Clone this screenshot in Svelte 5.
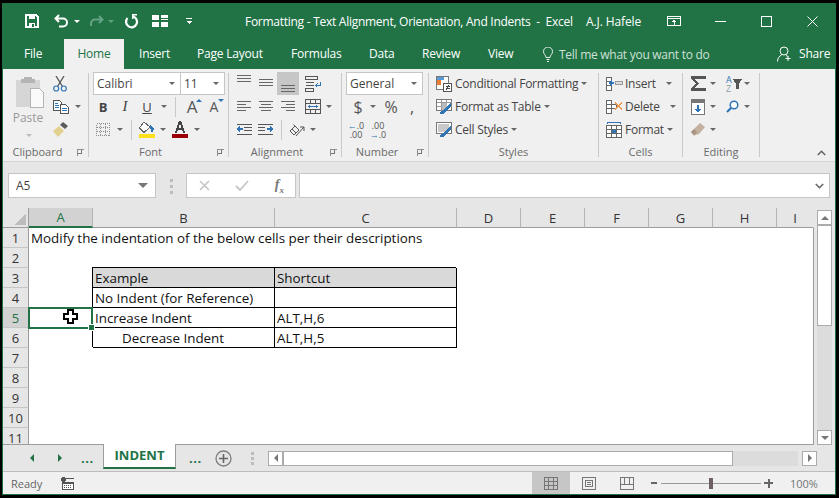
<script>
	const columns = [
		{ name: 'A', cls: 'cur' },
		{ name: 'B', cls: '' },
		{ name: 'C', cls: '' },
		{ name: 'D', cls: '' },
		{ name: 'E', cls: '' },
		{ name: 'F', cls: '' },
		{ name: 'G', cls: '' },
		{ name: 'H', cls: '' },
		{ name: 'I', cls: 'last' }
	];

	// only the cells that hold something, everything else is blank
	const cells = {
		'A1': { text: 'Modify the indentation of the below cells per their descriptions', cls: 'over' },
		'B3': { text: 'Example', cls: 't head' },
		'C3': { text: 'Shortcut', cls: 't head' },
		'B4': { text: 'No Indent (for Reference)', cls: 't' },
		'C4': { text: '', cls: 't' },
		'B5': { text: 'Increase Indent', cls: 't' },
		'C5': { text: 'ALT,H,6', cls: 't' },
		'B6': { text: 'Decrease Indent', cls: 't indent' },
		'C6': { text: 'ALT,H,5', cls: 't' }
	};

	const rows = [1, 2, 3, 4, 5, 6, 7, 8, 9, 10, 11];
</script>

<div class="win">
	<div class="titlebar">
		<svg class="q-save" width="16" height="16" viewBox="0 0 16 16"><path d="M2 2h10l2 2v10H2z" fill="none" stroke="#fff" stroke-width="2"/><path d="M5 2h6v4H5zM5 10h6v4H5z" fill="#fff"/><rect x="8" y="11" width="2" height="3" fill="#217346"/></svg>
		<svg class="q-undo aa" width="15" height="14" viewBox="0 0 15 14"><path d="M5 1 1.500 4.500 5 8M2 4.500h7a4 4 0 0 1 0 8H5" fill="none" stroke="#fff" stroke-width="2"/></svg>
		<i class="caret white q-d1"></i>
		<svg class="q-redo aa" width="15" height="14" viewBox="0 0 15 14"><path d="M10 2l3.500 3.500L10 9M13 5.500H6a4 4 0 0 0-4 4V12" fill="none" stroke="#64a284" stroke-width="2"/></svg>
		<i class="caret dim q-d2"></i>
		<svg class="q-refresh aa" width="15" height="15" viewBox="0 0 15 15"><path d="M9 2.500a5.500 5.500 0 1 1-5.500 1.600" fill="none" stroke="#fff" stroke-width="2.200"/><path d="M8 0h5v1.500H9.500V5H8z" fill="#fff"/></svg>
		<svg class="q-grid" width="16" height="12" viewBox="0 0 16 12"><path d="M0 0h7v5H0zM9 0h7v3H9zM9 4h7v1H9zM0 7h7v5H0zM9 7h7v5H9z" fill="#fff"/></svg>
		<svg class="q-more" width="6" height="8" viewBox="0 0 6 8"><path d="M0 1h6v1H0zM0 4h6L3 7z" fill="#fff"/></svg>
		<span class="doc">Formatting - Text Alignment, Orientation, And Indents&nbsp; -&nbsp; Excel</span>
		<span class="user">A.J. Hafele</span>
		<svg class="w-disp" width="14" height="10" viewBox="0 0 14 10"><path d="M.5.500h13v9H.5zM1 2h12" fill="none" stroke="#fff"/><path d="M7 3.500 4.500 6h2v3h1V6h2z" fill="#fff"/></svg>
		<svg class="w-min" width="11" height="1" viewBox="0 0 11 1"><rect width="11" height="1" fill="#fff"/></svg>
		<svg class="w-max" width="11" height="11" viewBox="0 0 11 11"><rect x=".5" y=".5" width="10" height="10" fill="none" stroke="#fff"/></svg>
		<svg class="w-close aa" width="11" height="11" viewBox="0 0 11 11"><path d="M.5.500l10 10M10.500.500l-10 10" stroke="#fff"/></svg>
	</div>

	<div class="tabs">
		<span class="tab">File</span>
		<span class="tab active">Home</span>
		<span class="tab t-ins">Insert</span>
		<span class="tab">Page Layout</span>
		<span class="tab">Formulas</span>
		<span class="tab">Data</span>
		<span class="tab">Review</span>
		<span class="tab">View</span>
		<svg class="aa" width="10" height="15" viewBox="0 0 10 15"><path d="M3 10.500C3 8 .5 7.500.5 4.500a4.500 4.500 0 0 1 9 0C9.500 7.500 7 8 7 10.500zM3.500 12.500h3M4 14.500h2" fill="none" stroke="#e6efe9"/></svg>
		<span class="tell">Tell me what you want to do</span>
		<svg class="aa" width="15" height="16" viewBox="0 0 15 16"><circle cx="7" cy="5" r="4" fill="none" stroke="#fff"/><path d="M.5 15.500c0-3.500 2-5.500 4-6.500M9 9.500l2 1" fill="none" stroke="#fff"/><path d="M11 10v5M8.500 12.500h5" stroke="#fff"/></svg>
		<span class="tab">Share</span>
	</div>

	<div class="ribbon">
		<section class="grp g-clip">
			<div class="body clip">
				<div class="paste">
					<svg width="28" height="31" viewBox="0 0 28 31"><path d="M0 3h24v27H0z" fill="#d6d6d6"/><path d="M8 0h8v2h3v4H5V2h3z" fill="#b4b4b4"/><path d="M14.500 11.500h9l4 4v15h-13z" fill="#fafafa" stroke="#b4b4b4"/></svg>
					<span>Paste</span>
					<i class="caret pale"></i>
				</div>
				<div class="clip-tools">
					<div class="tool">
						<svg class="aa" width="14" height="16" viewBox="0 0 14 16"><path d="M3 0l6.500 10.500M11 0 4.500 10.500" stroke="#555" stroke-width="1.300" fill="none"/><circle cx="3.200" cy="12.500" r="2.500" fill="none" stroke="#2f75b5" stroke-width="1.200"/><circle cx="10.800" cy="12.500" r="2.500" fill="none" stroke="#2f75b5" stroke-width="1.200"/></svg>
					</div>
					<div class="tool">
						<svg width="16" height="14" viewBox="0 0 16 14"><path d="M.5.500h6l2 2v8H.5z" fill="#fff" stroke="#555"/><path d="M7.500 4.500h5l3 3v6h-8z" fill="#fff" stroke="#555"/><path d="M2 3h3M2 5h4M2 7h4M9 8h5M9 10h5" stroke="#2f75b5"/></svg>
						<i class="caret clip-d"></i>
					</div>
					<div class="tool">
						<svg class="aa" width="16" height="15" viewBox="0 0 16 15"><path d="M10 0l5 4-3 3-5-4z" fill="#595959"/><path d="M6 4 0 9l5 6 6-6z" fill="#e2d18e"/></svg>
					</div>
				</div>
			</div>
			<div class="label shifted"><span>Clipboard</span><i class="launcher"></i></div>
		</section>
		<i class="sep"></i>

		<section class="grp g-font">
			<div class="body">
				<div class="row r-combo">
					<div class="combo font-name"><span>Calibri</span><i class="caret"></i></div>
					<div class="combo font-size"><span>11</span><i class="caret"></i></div>
				</div>
				<div class="row ml3">
					<b class="s22 glyph">B</b>
					<em class="s22 glyph">I</em>
					<u class="s22 glyph">U</u>
					<span class="s12"><i class="caret"></i></span>
					<i class="vbar v-font1"></i>
					<span class="s22 big">A<i class="up"></i></span>
					<span class="s22 small">A<i class="down"></i></span>
				</div>
				<div class="row ml3">
					<span class="s22">
						<svg width="14" height="13" viewBox="0 0 14 13"><path d="M.5.500h13v12H.5zM.5 4.500h13M.5 8.500h13M4.500.500v12M9.500.500v12" fill="none" stroke="#8c8c8c" stroke-dasharray="1 1"/></svg>
					</span>
					<span class="s12"><i class="caret"></i></span>
					<i class="vbar v-font2"></i>
					<span class="s22">
						<svg width="16" height="17" viewBox="0 0 16 17"><path d="M5 1 .5 7 5 11.500 11 6z" fill="#fff" stroke="#666"/><path d="M11 4l4 3-1 4h-2z" fill="#2f75b5"/><rect y="13" width="16" height="4" fill="#fde01c"/></svg>
					</span>
					<span class="s10"><i class="caret"></i></span>
					<span class="s24">
						<svg width="16" height="17" viewBox="0 0 16 17"><path d="M6.800 0h2.400l4 12h-2l-1-3H5.800l-1 3h-2zM6.400 7h3.200L8 2.200z" fill="#444"/><rect y="13" width="16" height="4" fill="#9c0006"/></svg>
					</span>
					<span class="s10"><i class="caret"></i></span>
				</div>
			</div>
			<div class="label shifted"><span>Font</span><i class="launcher"></i></div>
		</section>
		<i class="sep"></i>

		<section class="grp g-align">
			<div class="body">
				<div class="row ml4">
					<span class="s22"><svg width="14" height="23" viewBox="0 0 14 23"><path d="M0 3.500h14M0 6.500h14M0 9.500h14" stroke="#666"/></svg></span>
					<span class="s22"><svg width="14" height="23" viewBox="0 0 14 23"><path d="M0 7.500h14M0 10.500h14M0 13.500h14" stroke="#666"/></svg></span>
					<span class="s22 on"><svg width="14" height="23" viewBox="0 0 14 23"><path d="M0 13.500h14M0 16.500h14M0 19.500h14" stroke="#666"/></svg></span>
					<span class="s22 ml3">
						<svg width="16" height="16" viewBox="0 0 16 16"><path d="M.5.500h12v3H.5zM.5 6.500h8M.5 9.500h8M.5 12.500h8v3H.5z" fill="none" stroke="#555"/><path d="M15 6v3.500h-4M12.500 7.500 10.500 9.500l2 2" fill="none" stroke="#2f75b5"/></svg>
					</span>
				</div>
				<div class="row ml4">
					<span class="s22"><svg width="14" height="11" viewBox="0 0 14 11"><path d="M0 .5h14M0 3.500h9M0 6.500h14M0 9.500h9" stroke="#666"/></svg></span>
					<span class="s22"><svg width="14" height="11" viewBox="0 0 14 11"><path d="M0 .5h14M2 3.500h10M0 6.500h14M2 9.500h10" stroke="#666"/></svg></span>
					<span class="s22"><svg width="14" height="11" viewBox="0 0 14 11"><path d="M0 .5h14M5 3.500h9M0 6.500h14M5 9.500h9" stroke="#666"/></svg></span>
					<span class="s22 ml3">
						<svg width="16" height="15" viewBox="0 0 16 15"><path d="M.5.500h15v14H.5zM.5 4.500h15M.5 10.500h15M5.500.500v4M10.500.500v4M5.500 10.500v4M10.500 10.500v4" fill="none" stroke="#555"/><path d="M3 7.500h10" stroke="#2f75b5"/><path d="M3 7.500l2-2v4zM13 7.500l-2-2v4z" fill="#2f75b5"/></svg>
					</span>
					<span class="s10"><i class="caret"></i></span>
				</div>
				<div class="row ml4">
					<span class="s22"><svg width="16" height="12" viewBox="0 0 16 12"><path d="M1 .5h15M8 3.500h8M8 6.500h8M1 10.500h15" stroke="#555"/><path d="M7 5H2" stroke="#2f75b5" stroke-width="2"/><path d="M0 5l4-3.500v7z" fill="#2f75b5"/></svg></span>
					<span class="s22"><svg width="16" height="12" viewBox="0 0 16 12"><path d="M0 .5h15M0 3.500h7M0 6.500h7M0 10.500h15" stroke="#555"/><path d="M9 5h5" stroke="#2f75b5" stroke-width="2"/><path d="M16 5l-4-3.500v7z" fill="#2f75b5"/></svg></span>
					<i class="vbar v-align"></i>
					<span class="s22"><svg class="aa" width="16" height="14" viewBox="0 0 16 14"><path d="M1 8l5-5 4 4-5 5zM3 6l4 4M4.500 1.500l3 3" fill="none" stroke="#555"/><path d="M7 13 15 4M15 4h-4M15 4v4" fill="none" stroke="#555"/></svg></span>
					<span class="s10"><i class="caret"></i></span>
				</div>
			</div>
			<div class="label shifted"><span>Alignment</span><i class="launcher"></i></div>
		</section>
		<i class="sep"></i>

		<section class="grp g-num">
			<div class="body">
				<div class="row r-combo"><div class="combo num-fmt"><span>General</span><i class="caret"></i></div></div>
				<div class="row ml5">
					<span class="s22 sym">$</span>
					<span class="s8"><i class="caret"></i></span>
					<span class="s22 ml3 sym">%</span>
					<span class="s20 sym">,</span>
				</div>
				<div class="row ml3">
					<span class="s22 dec"><em class="arrow">←</em>.0<br />.00</span>
					<span class="s22 dec">.00<br /><em class="arrow">→</em>.0</span>
				</div>
			</div>
			<div class="label shifted"><span>Number</span><i class="launcher"></i></div>
		</section>
		<i class="sep"></i>

		<section class="grp g-styles">
			<div class="body">
				<div class="row item">
					<svg width="16" height="16" viewBox="0 0 16 16"><path d="M.5.500h12v13H.5z" fill="#fff" stroke="#777"/><path d="M1 1h7v3H1z" fill="#5b9bd5"/><path d="M1 4h4v5H1z" fill="#ed7d31"/><path d="M7.500 7.500h8v8h-8z" fill="#fff" stroke="#555"/><path d="M9.500 10h4M9.500 12.500h4M12.500 9l-2 5" stroke="#444"/></svg>
					<span>Conditional Formatting</span><i class="caret"></i>
				</div>
				<div class="row item">
					<svg width="16" height="16" viewBox="0 0 16 16"><path d="M.5.500h15v11H.5z" fill="#fff" stroke="#777"/><path d="M.5 3.500h15M.5 7.500h15M5.500.5v11M10.500.5v11" stroke="#999"/><path d="M6 4h5v7H6z" fill="#bbb"/><path d="M15 3 8 11l-3 1-1 3h2l3-1 6-7z" fill="#2f75b5"/></svg>
					<span>Format as Table</span><i class="caret"></i>
				</div>
				<div class="row item">
					<svg width="16" height="16" viewBox="0 0 16 16"><path d="M.5.500h15v11H.5z" fill="#fff" stroke="#777"/><path d="M2 2h11v8H2z" fill="#c8c8c8"/><path d="M15 3 8 11l-3 1-1 3h2l3-1 6-7z" fill="#2f75b5"/></svg>
					<span>Cell Styles</span><i class="caret"></i>
				</div>
			</div>
			<div class="label"><span>Styles</span></div>
		</section>
		<i class="sep"></i>

		<section class="grp g-cells">
			<div class="body">
				<div class="row item">
					<svg width="17" height="16" viewBox="0 0 17 16"><path d="M.5 1.500h5v4h-5zM.5 5.500h5v4h-5zM.5 9.500h5v5h-5zM5.500 5.500v9" fill="#fff" stroke="#666"/><path d="M9.500 5.500h7v3h-7z" fill="#ddd" stroke="#999"/><path d="M8 7H4" stroke="#2f75b5" stroke-width="2"/><path d="M2 7l4-3v6z" fill="#2f75b5"/></svg>
					<span>Insert</span><i class="caret c-ins"></i>
				</div>
				<div class="row item">
					<svg width="17" height="16" viewBox="0 0 17 16"><path d="M.5 1.500h5v4h-5zM.5 5.500h5v4h-5zM5.500 5.500h5v4h-5zM.5 9.500h5v5h-5z" fill="#fff" stroke="#666"/><path d="M9 3.500l7 7M16 3.500l-7 7" stroke="#ed9a4e" stroke-width="2"/></svg>
					<span>Delete</span><i class="caret c-del"></i>
				</div>
				<div class="row item">
					<svg width="17" height="16" viewBox="0 0 17 16"><path d="M2 .5h12" stroke="#2f75b5"/><path d="M1.500 0v2M14.500 0v2" stroke="#2f75b5"/><path d="M.5 3.500h15v12H.5zM.5 7.500h15M.5 11.500h15M5.500 3.500v12M10.500 3.500v12" fill="#fff" stroke="#666"/><path d="M6 8h4v3H6z" fill="#2f75b5"/></svg>
					<span>Format</span><i class="caret c-fmt"></i>
				</div>
			</div>
			<div class="label"><span>Cells</span></div>
		</section>
		<i class="sep"></i>

		<section class="grp g-edit">
			<div class="body">
				<div class="row ml5">
					<span class="s20"><svg width="15" height="15" viewBox="0 0 15 15"><path d="M0 0h15v3H3.500L8 7.500 3.500 12H15v3H0v-2l5-5.500L0 2z" fill="#555"/></svg></span>
					<span class="s10"><i class="caret"></i></span>
					<span class="s20 ml4 sort">
						<span class="az"><i class="a">A</i><i class="z">Z</i></span>
						<svg width="9" height="10" viewBox="0 0 9 10"><path d="M0 0h9L6 5v5H3V5z" fill="#555"/></svg>
					</span>
					<span class="s10"><i class="caret"></i></span>
				</div>
				<div class="row ml5">
					<span class="s20"><svg width="14" height="16" viewBox="0 0 14 16"><path d="M.5.500h13v15H.5z" fill="#fff" stroke="#777"/><path d="M1 1h12v3H1z" fill="#777"/><path d="M6 6h2v4h2.500L7 14l-3.500-4H6z" fill="#2f75b5"/></svg></span>
					<span class="s10"><i class="caret"></i></span>
					<span class="s20 ml4"><svg class="aa" width="13" height="13" viewBox="0 0 13 13"><circle cx="8" cy="5" r="3.800" fill="#fff" stroke="#2f75b5" stroke-width="1.500"/><path d="M5 8 1 12" stroke="#2f75b5" stroke-width="2.200"/></svg></span>
					<span class="s10"><i class="caret"></i></span>
				</div>
				<div class="row ml5">
					<span class="s20"><svg class="aa" width="14" height="13" viewBox="0 0 14 13"><path d="M9 0l5 4-6 7-5 1.500L0 9z" fill="#c3b09e"/><path d="M0 9l3 3.500L6 9 3 6z" fill="#a99583"/></svg></span>
					<span class="s10"><i class="caret"></i></span>
				</div>
			</div>
			<div class="label"><span>Editing</span></div>
		</section>
		<i class="sep"></i>
		<div class="collapse">
			<svg class="aa" width="9" height="6" viewBox="0 0 9 6"><path d="M.8 5 4.500 1.300 8.200 5" fill="none" stroke="#666" stroke-width="1.600"/></svg>
		</div>
	</div>

	<div class="formula">
		<div class="namebox"><span>A5</span><i class="caret wide"></i></div>
		<div class="grip"><i></i><i></i><i></i></div>
		<div class="fxbox">
			<svg class="aa" width="11" height="11" viewBox="0 0 11 11"><path d="M1 1l9 9M10 1l-9 9" stroke="#c6c6c6" stroke-width="1.600"/></svg>
			<svg class="aa" width="14" height="11" viewBox="0 0 14 11"><path d="M1 6l4 4 8-9" fill="none" stroke="#c6c6c6" stroke-width="1.800"/></svg>
			<span class="fx">f<sub>x</sub></span>
		</div>
		<div class="input">
			<svg class="aa" width="9" height="6" viewBox="0 0 9 6"><path d="M.8 1 4.500 4.700 8.200 1" fill="none" stroke="#666" stroke-width="1.600"/></svg>
		</div>
	</div>

	<div class="sheet">
		<div class="grid">
			<div class="hd corner"><svg width="12" height="12" viewBox="0 0 12 12"><path d="M12 0v12H0z" fill="#bdbdbd"/></svg></div>
			{#each columns as col}
				<div class="hd col {col.cls}">{col.name}</div>
			{/each}
			{#each rows as r}
				<div class="hd rownum" class:cur={r === 5}>{r}</div>
				{#each columns as col}
					{@const cell = cells[col.name + r]}
					<div class="cell {cell ? cell.cls : ''}" class:last={col.name === 'I'}>
						{#if cell}{cell.text}{/if}
						{#if col.name === 'A' && r === 5}
							<div class="sel"><i class="handle"></i></div>
							<svg class="cursor" width="16" height="16" viewBox="0 0 16 16"><path d="M5.500 1.500h5v4h4v5h-4v4h-5v-4h-4v-5h4z" fill="#fff" stroke="#000" stroke-width="2"/></svg>
						{/if}
					</div>
				{/each}
			{/each}
		</div>
		<div class="vscroll">
			<div class="sbtn"><i class="tri up-tri"></i></div>
			<div class="vthumb"></div>
			<div class="vtrack"></div>
			<div class="sbtn"><i class="tri down-tri"></i></div>
		</div>
	</div>

	<div class="sheetbar">
		<i class="tri left-tri green a1"></i>
		<i class="tri right-tri green a2"></i>
		<span class="more m1">...</span>
		<div class="sheettab">INDENT</div>
		<span class="more m2">...</span>
		<svg class="plus aa" width="17" height="17" viewBox="0 0 17 17"><circle cx="8.500" cy="8.500" r="7.500" fill="none" stroke="#7f7f7f" stroke-width="1.300"/><path d="M8.500 4v9M4 8.500h9" stroke="#666" stroke-width="1.600"/></svg>
		<div class="grip small"><i></i><i></i><i></i></div>
		<div class="sbtn h"><i class="tri left-tri"></i></div>
		<div class="hthumb"></div>
		<div class="htrack"></div>
		<div class="sbtn h"><i class="tri right-tri"></i></div>
	</div>

	<div class="status">
		<span class="ready">Ready</span>
		<svg class="macro" width="13" height="13" viewBox="0 0 13 13"><circle cx="2.500" cy="2.500" r="2.500" fill="#555"/><path d="M5 1h8v1H5zM1 5h12v8H1z" fill="#555"/><path d="M2 7h10v5H2z" fill="#fff"/><path d="M3 8h1v1H3zM5 8h1v1H5zM7 8h1v1H7zM9 8h1v1H9zM3 10h1v1H3zM5 10h1v1H5zM7 10h1v1H7zM9 10h1v1H9z" fill="#555"/></svg>
		<div class="views">
			<span class="view on"><svg width="14" height="13" viewBox="0 0 14 13"><path d="M.5.500h13v12H.5zM.5 4.500h13M.5 8.500h13M4.500.500v12M9.500.500v12" fill="none" stroke="#767676"/></svg></span>
			<span class="view"><svg width="14" height="13" viewBox="0 0 14 13"><path d="M.5.500h13v12H.5z" fill="none" stroke="#767676"/><path d="M3.500 3.500h7v6h-7zM5 5.500h4M5 7.500h4" fill="none" stroke="#767676"/></svg></span>
			<span class="view"><svg width="14" height="13" viewBox="0 0 14 13"><path d="M.5.500h13v12H.5zM.5 7.500h13M4.500.500v7M9.500.500v7" fill="none" stroke="#767676"/></svg></span>
		</div>
		<i class="zoom-minus"></i>
		<div class="slider"><i class="knob"></i></div>
		<i class="zoom-plus"></i>
		<span class="pct">100%</span>
	</div>
</div>

<style>
	:global(body) {
		margin: 0;
		background: #000;
		overflow: hidden;
	}

	.win {
		box-sizing: border-box;
		width: 834px;
		height: 492px;
		margin: 3px 0 0 2px;
		border: 1px solid #217346;
		border-top: 0;
		background: #e6e6e6;
		font-family: 'Open Sans', 'Noto Sans', sans-serif;
		font-size: 12px;
		color: #444;
		display: flex;
		flex-direction: column;
		overflow: hidden;
	}

	svg {
		display: block;
		flex: none;
		shape-rendering: crispEdges;
	}

	svg.aa {
		shape-rendering: auto;
	}

	i {
		display: block;
		font-style: normal;
	}

	.caret {
		width: 0;
		height: 0;
		flex: none;
		border-left: 3px solid transparent;
		border-right: 3px solid transparent;
		border-top: 3px solid #666;
	}

	.caret.white {
		border-top-color: #fff;
	}

	.caret.dim {
		border-top-color: #64a284;
	}

	.caret.pale {
		border-top-color: #bbb;
	}

	.caret.wide {
		border-left-width: 5px;
		border-right-width: 5px;
		border-top-width: 5px;
		border-top-color: #777;
	}

	/* title bar */
	.titlebar {
		height: 36px;
		flex: none;
		background: #217346;
		color: #fff;
		display: flex;
		align-items: center;
		font-size: 12px;
		white-space: nowrap;
	}

	.titlebar > * {
		flex: none;
	}

	.q-save {
		margin-left: 21px;
	}
	.q-undo {
		margin-left: 14px;
	}
	.q-d1 {
		margin-left: 5px;
	}
	.q-redo {
		margin-left: 9px;
	}
	.q-d2 {
		margin-left: 4px;
	}
	.q-refresh {
		margin-left: 10px;
	}
	.q-grid {
		margin-left: 13px;
	}
	.q-more {
		margin-left: 18px;
	}

	.doc {
		margin-left: 53px;
		width: 328px;
		letter-spacing: -0.27px;
	}

	.user {
		margin-left: 13px;
		width: 81px;
		letter-spacing: -0.1px;
	}

	.w-min {
		margin-left: 34px;
	}
	.w-max {
		margin-left: 35px;
	}
	.w-close {
		margin-left: 35px;
	}

	/* tabs */
	.tabs {
		height: 30px;
		flex: none;
		box-sizing: border-box;
		padding-left: 21px;
		background: #217346;
		color: #fff;
		display: grid;
		grid-template-columns: 40px 60px 73px 94px 78px 53px 66px 55px 16px 218px 22px 40px;
		align-items: center;
		white-space: nowrap;
		font-size: 12px;
	}

	.tab {
		line-height: 30px;
		letter-spacing: -0.2px;
	}

	.tab.active {
		text-align: center;
		background: #f0f0f0;
		color: #217346;
	}

	.t-ins {
		padding-left: 15px;
	}

	.tell {
		color: #cfe0d6;
		letter-spacing: -0.27px;
	}

	/* ribbon */
	.ribbon {
		box-sizing: border-box;
		height: 93px;
		flex: none;
		background: #f0f0f0;
		border-bottom: 1px solid #d4d4d4;
		padding-top: 3px;
		display: flex;
		align-items: flex-start;
	}

	.sep {
		width: 1px;
		height: 84px;
		margin-top: 1px;
		background: #c9c9c9;
		flex: none;
	}

	.grp {
		height: 88px;
		display: flex;
		flex-direction: column;
		flex: none;
		position: relative;
	}

	.g-clip {
		width: 85px;
	}
	.g-font {
		width: 139px;
	}
	.g-align {
		width: 112px;
	}
	.g-num {
		width: 86px;
	}
	.g-styles {
		width: 169px;
	}
	.g-cells {
		width: 83px;
	}
	.g-edit {
		width: 76px;
	}

	.body {
		height: 72px;
		flex: none;
	}

	.label {
		height: 14px;
		margin-top: 1px;
		display: flex;
		justify-content: center;
		align-items: center;
		color: #6a6a6a;
		font-size: 11px;
		line-height: 14px;
	}

	.label.shifted {
		padding-right: 16px;
	}

	.launcher {
		position: absolute;
		right: 4px;
		bottom: 4px;
		width: 6px;
		height: 6px;
		border: 1px solid #8e8e8e;
		border-width: 1px 0 0 1px;
		box-shadow: inset -2px -2px 0 #f0f0f0, inset -3px -3px 0 #777;
	}

	.row {
		height: 23px;
		display: flex;
		align-items: center;
	}

	.row > span,
	.row > b,
	.row > em,
	.row > u {
		display: flex;
		align-items: center;
		justify-content: center;
		flex: none;
		height: 23px;
	}

	.s8 {
		width: 8px;
	}
	.s10 {
		width: 10px;
	}
	.s12 {
		width: 12px;
	}
	.s20 {
		width: 20px;
	}
	.s22 {
		width: 22px;
	}
	.s24 {
		width: 24px;
	}
	.ml3 {
		margin-left: 3px;
	}
	.ml4 {
		margin-left: 4px;
	}
	.ml5 {
		margin-left: 5px;
	}

	.row > .on {
		background: #c6c6c6;
	}

	.row > .s20.ml4 {
		margin-left: 4px;
	}

	.vbar {
		width: 1px;
		height: 20px;
		background: #c9c9c9;
		flex: none;
	}

	.v-font1 {
		margin: 0 5px 0 5px;
	}
	.v-font2 {
		margin: 0 4px 0 5px;
	}
	.v-align {
		margin: 0 4px;
	}

	.glyph {
		font-size: 13px;
		color: #444;
	}

	em.glyph {
		font-family: 'Liberation Serif', serif;
		font-size: 15px;
	}

	.big,
	.small {
		position: relative;
		color: #555;
	}

	.big {
		font-size: 17px;
	}

	.small {
		font-size: 14px;
	}

	.up,
	.down {
		position: absolute;
		right: 1px;
		top: 4px;
		width: 0;
		height: 0;
		border-left: 3px solid transparent;
		border-right: 3px solid transparent;
	}

	.up {
		border-bottom: 3px solid #2f75b5;
	}

	.down {
		border-top: 3px solid #2f75b5;
	}

	/* clipboard */
	.clip {
		display: flex;
	}

	.paste {
		margin-left: 3px;
		width: 46px;
		padding-top: 5px;
		display: flex;
		flex-direction: column;
		align-items: center;
		color: #9a9a9a;
	}

	.paste svg {
		margin-left: 2px;
	}

	.paste span {
		margin: 1px 2px 0 0;
		line-height: 17px;
		font-size: 12px;
	}

	.paste .caret {
		margin-top: 8px;
	}

	.clip-tools {
		width: 34px;
	}

	.tool {
		height: 23px;
		display: flex;
		align-items: center;
		position: relative;
	}

	.tool svg {
		margin-left: 1px;
	}

	.clip-d {
		margin-left: 6px;
	}

	/* combos */
	.r-combo {
		padding-left: 4px;
	}

	.combo {
		box-sizing: border-box;
		height: 23px;
		background: #fff;
		border: 1px solid #c6c6c6;
		display: flex;
		align-items: center;
		justify-content: space-between;
		padding: 0 5px 0 3px;
		color: #444;
		flex: none;
	}

	.font-name {
		width: 88px;
	}

	.font-size {
		width: 44px;
		border-left: 0;
	}

	.num-fmt {
		width: 77px;
	}

	.sym {
		font-size: 16px;
		color: #555;
	}

	.row > .dec {
		display: block;
		font-size: 9px;
		line-height: 9px;
		height: auto;
		color: #555;
		text-align: center;
	}

	.arrow {
		color: #2f75b5;
		font-style: normal;
		font-weight: 700;
	}

	/* list style items */
	.item {
		padding-left: 7px;
		color: #444;
		white-space: nowrap;
	}

	.item > span {
		margin-left: 3px;
		letter-spacing: -0.25px;
	}

	.item .caret {
		margin-left: 3px;
	}

	.g-cells .item svg {
		margin-right: -1px;
	}

	.item .c-ins {
		margin-left: 10px;
	}
	.item .c-del {
		margin-left: 10px;
	}
	.item .c-fmt {
		margin-left: 3px;
	}

	.row > .sort {
		justify-content: flex-start;
		padding-left: 4px;
		box-sizing: border-box;
		gap: 1px;
	}

	.az {
		font-size: 9px;
		line-height: 9px;
	}

	.az .a {
		color: #2f75b5;
	}

	.az .z {
		color: #8aa0a0;
	}

	.collapse {
		margin: 78px 0 0 57px;
	}

	/* formula bar */
	.formula {
		height: 46px;
		flex: none;
		box-sizing: border-box;
		padding-top: 11px;
		display: flex;
		align-items: flex-start;
	}

	.namebox,
	.fxbox,
	.input {
		box-sizing: border-box;
		height: 25px;
		background: #fff;
		border: 1px solid #c6c6c6;
		display: flex;
		align-items: center;
		flex: none;
	}

	.namebox {
		margin-left: 5px;
		width: 148px;
		padding: 0 7px;
		justify-content: space-between;
		font-size: 12px;
	}

	.grip {
		width: 30px;
		display: flex;
		flex-direction: column;
		align-items: center;
		gap: 3px;
		flex: none;
	}

	.formula .grip {
		padding-top: 6px;
	}

	.grip i {
		width: 3px;
		height: 3px;
		background: #bdbdbd;
	}

	.fxbox {
		width: 110px;
		padding: 0 11px 0 12px;
		justify-content: space-between;
	}

	.fx {
		font-family: 'Liberation Serif', serif;
		font-style: italic;
		font-size: 14px;
		font-weight: 700;
		color: #777;
	}

	.fx sub {
		font-size: 9px;
	}

	.input {
		margin-left: 3px;
		width: 531px;
		justify-content: flex-end;
		padding-right: 5px;
	}

	/* sheet */
	.sheet {
		height: 237px;
		flex: none;
		display: flex;
	}

	.grid {
		box-sizing: border-box;
		width: 811px;
		height: 237px;
		flex: none;
		display: grid;
		grid-template-columns: 26px 64px 182px 182px repeat(5, 64px) 37px;
		grid-auto-rows: 20px;
		overflow: hidden;
		border-bottom: 1px solid #9c9c9c;
		background: #fff;
		font-size: 13.400px;
		color: #111;
	}

	.hd {
		box-sizing: border-box;
		background: #e6e6e6;
		display: flex;
		align-items: center;
		justify-content: center;
		font-size: 13px;
		color: #333;
	}

	.corner {
		border-right: 1px solid #9c9c9c;
		border-bottom: 1px solid #9c9c9c;
		align-items: flex-end;
		justify-content: flex-end;
		padding: 0 2px 2px 0;
	}

	.col {
		border-right: 1px solid #b4b4b4;
		border-bottom: 1px solid #9c9c9c;
	}

	.col.cur {
		background: #d2d2d2;
		border-bottom: 2px solid #217346;
		color: #217346;
	}

	.col.last {
		border-right-color: #e6e6e6;
	}

	.rownum {
		border-right: 1px solid #9c9c9c;
		border-bottom: 1px solid #c6c6c6;
	}

	.rownum.cur {
		background: #d2d2d2;
		color: #217346;
	}

	.cell {
		box-sizing: border-box;
		position: relative;
		padding-left: 2px;
		line-height: 20px;
		white-space: nowrap;
	}

	.cell.last {
		border-right: 1px solid #9c9c9c;
	}

	.cell.t {
		box-shadow:
			-1px -1px 0 0 #000,
			inset -1px -1px 0 0 #000;
	}

	.cell.head {
		background: #d9d9d9;
	}

	.cell.indent {
		padding-left: 29px;
	}

	.sel {
		position: absolute;
		left: -1px;
		top: -1px;
		right: 0;
		bottom: -1px;
		border: 2px solid #217346;
		z-index: 2;
	}

	.handle {
		position: absolute;
		right: -4px;
		bottom: -4px;
		width: 5px;
		height: 5px;
		background: #217346;
		border: 1px solid #fff;
	}

	.cursor {
		position: absolute;
		left: 33px;
		top: 0;
		z-index: 3;
	}

	.vscroll {
		box-sizing: border-box;
		width: 21px;
		padding: 2px 0 0 3px;
		display: flex;
		flex-direction: column;
		flex: none;
	}

	.sbtn {
		box-sizing: border-box;
		width: 15px;
		height: 15px;
		background: #fff;
		border: 1px solid #ababab;
		display: flex;
		align-items: center;
		justify-content: center;
		flex: none;
	}

	.vthumb {
		box-sizing: border-box;
		width: 15px;
		height: 101px;
		background: #fff;
		border: 1px solid #ababab;
		flex: none;
	}

	.vtrack {
		width: 15px;
		height: 104px;
		background: #dcdcdc;
		flex: none;
	}

	.tri {
		width: 0;
		height: 0;
		border: 4px solid transparent;
	}

	.up-tri {
		border-top: 0;
		border-bottom: 4px solid #777;
	}

	.down-tri {
		border-bottom: 0;
		border-top: 4px solid #777;
	}

	.left-tri {
		border-left: 0;
		border-right: 4px solid #777;
	}

	.right-tri {
		border-right: 0;
		border-left: 4px solid #777;
	}

	.left-tri.green {
		border-right-color: #217346;
	}

	.right-tri.green {
		border-left-color: #217346;
	}

	/* sheet tabs */
	.sheetbar {
		box-sizing: border-box;
		height: 27px;
		flex: none;
		border-bottom: 1px solid #bdbdbd;
		display: flex;
		align-items: center;
	}

	.sheetbar > * {
		flex: none;
	}

	.a1 {
		margin-left: 27px;
	}

	.a2 {
		margin-left: 24px;
	}

	.more {
		color: #217346;
		font-weight: 700;
		font-size: 13px;
		letter-spacing: 0.5px;
	}

	.m1 {
		margin-left: 19px;
		width: 22px;
	}

	.sheettab {
		box-sizing: border-box;
		width: 73px;
		height: 25px;
		margin-top: -1px;
		align-self: flex-start;
		background: #fff;
		border: 1px solid #9c9c9c;
		border-top: 0;
		border-bottom: 2px solid #217346;
		color: #217346;
		font-weight: 700;
		font-size: 13px;
		text-align: center;
		line-height: 23px;
		position: relative;
	}

	.m2 {
		margin-left: 13px;
		width: 21px;
	}

	.plus {
		margin-left: 5px;
	}

	.grip.small {
		width: 24px;
		margin: 0 4px 0 8px;
		gap: 2px;
	}

	.hthumb {
		box-sizing: border-box;
		width: 450px;
		height: 15px;
		background: #fff;
		border: 1px solid #ababab;
	}

	.htrack {
		width: 65px;
		height: 15px;
		margin-right: 4px;
		background: #dcdcdc;
	}

	/* status bar */
	.status {
		height: 22px;
		flex: none;
		background: #f0f0f0;
		display: flex;
		align-items: center;
		font-size: 11px;
		color: #666;
	}

	.status > * {
		flex: none;
	}

	.ready {
		margin-left: 8px;
		width: 50px;
	}

	.views {
		margin-left: 458px;
		display: flex;
		height: 22px;
	}

	.view {
		width: 38px;
		display: flex;
		align-items: center;
		justify-content: center;
	}

	.view.on {
		background: #c6c6c6;
	}

	.zoom-minus {
		margin-left: 5px;
		width: 6px;
		height: 2px;
		background: #666;
	}

	.slider {
		margin-left: 4px;
		width: 100px;
		height: 1px;
		background: #999;
		position: relative;
	}

	.knob {
		position: absolute;
		left: 48px;
		top: -5px;
		width: 4px;
		height: 11px;
		background: #6e5f66;
	}

	.zoom-plus {
		margin-left: 3px;
		width: 9px;
		height: 9px;
		background:
			linear-gradient(#666, #666) center / 9px 2px no-repeat,
			linear-gradient(#666, #666) center / 2px 9px no-repeat;
	}

	.pct {
		margin-left: 17px;
		color: #777;
	}
</style>
